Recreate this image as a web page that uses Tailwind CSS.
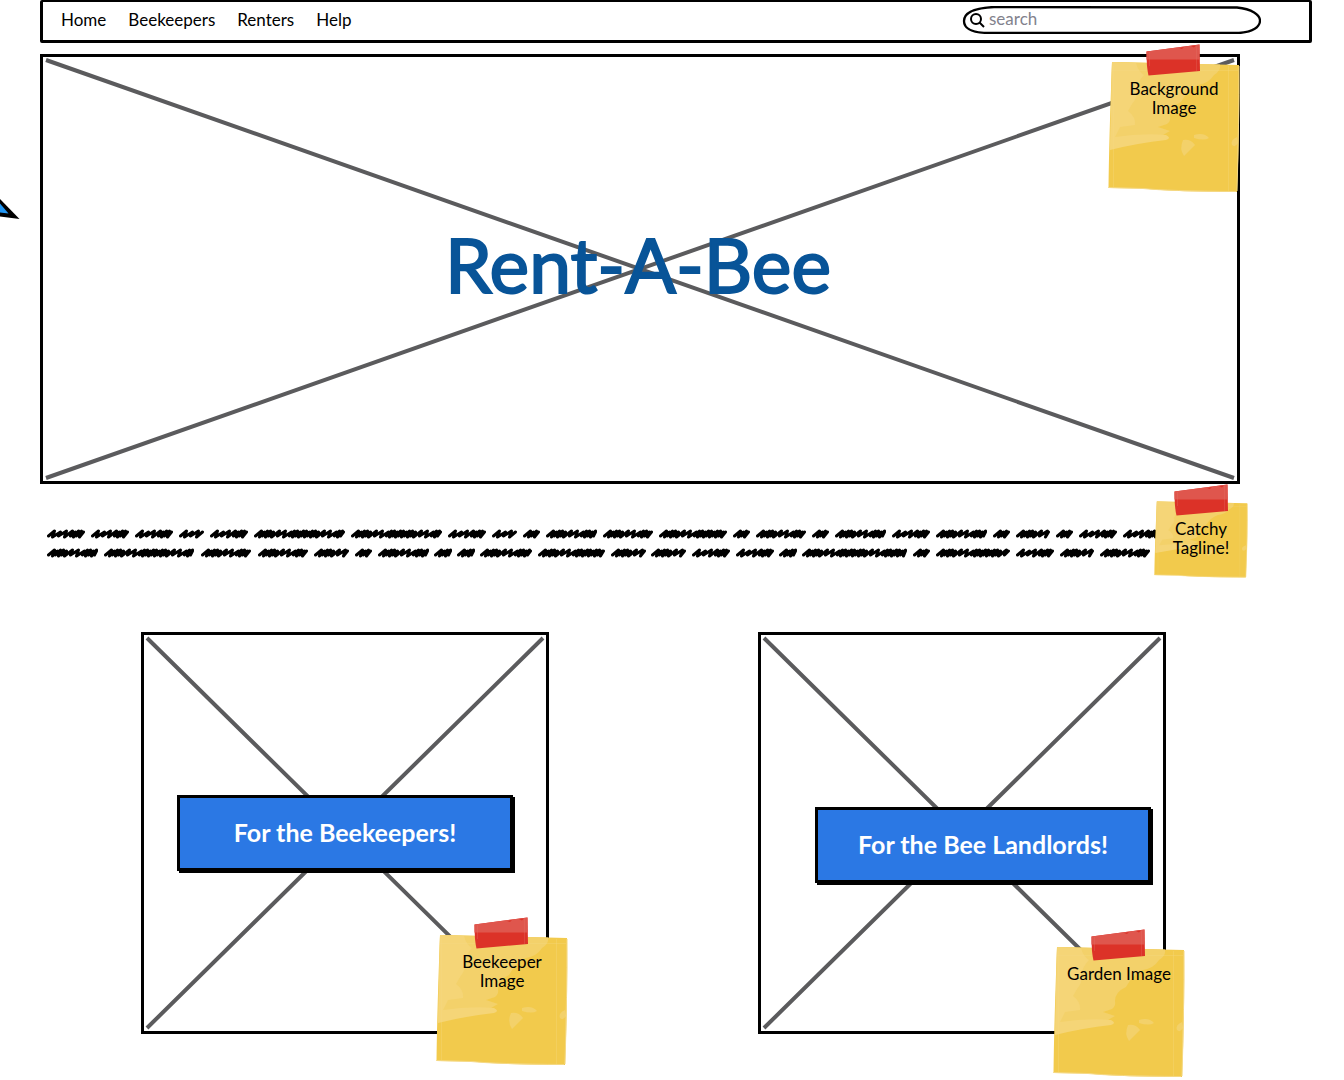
<!DOCTYPE html>
<html lang="en">
<head>
<meta charset="utf-8">
<meta name="viewport" content="width=device-width, initial-scale=1">
<title>Rent-A-Bee</title>
<script src="https://cdn.jsdelivr.net/npm/@tailwindcss/browser@4"></script>
</head>
<body class="relative min-h-screen overflow-x-hidden bg-white font-['Lato',sans-serif] text-[17px] text-black">

<svg class="absolute" width="0" height="0" aria-hidden="true">
  <symbol id="note" viewBox="0 0 132 132" preserveAspectRatio="none">
    <path fill="#f2ca4c" d="M4 1 L131 4 Q132 60 129 131 L92 130.500 Q60 130 35 127.500 L0.500 127 Q1 80 4 1Z"/>
    <path fill="#f3d16a" d="M4 1 L112 3.500 Q113 10 106 14 Q101 22 90 24 Q80 28 73 41 Q62 46 62 55 Q63 60 59 63 L50 66 Q56 68 62 70 L55 74 Q40 80 2 88Z"/>
    <path fill="#f5d577" d="M4 1 L28 2 Q30 10 36 14 Q30 20 28 29 Q30 36 24 43 L20 50 Q28 56 27 64 L12 66 L7 76 Q34 72 58 74 Q64 77 58 79 Q30 82 2 89Z"/>
    <path fill="#f3d16a" d="M86 74 Q96 71 101 77 Q96 80 86 77Z M75 79 Q83 78 87 84 L76 95 Q71 88 75 79Z M129 76 Q122 79 124 84 Q127 87 130 82Z"/>
    <path fill="none" stroke="#f5d985" stroke-opacity=".3" d="M4 9.500H130 M5.500 5V126 M120.500 5V130"/>
    <path fill="none" stroke="#f5d985" d="M0.500 126.500 L35 127.500 Q60 130 128 130.500 M131 5 Q131 60 129 130"/>
  </symbol>
  <symbol id="tape" viewBox="0 0 54 32">
    <path fill="#dc3228" d="M0.500 7.500 L53.500 0.500 L54 27 L2.500 31.500 Q0.500 24 0.500 7.500Z"/>
    <path fill="#df564d" d="M0.500 7.500 L53.500 0.500 V15.500 H0.500Z"/>
    <path fill="#dc3228" d="M33 4 L38 3 L36 5Z M45 2 L50 1.500 L48 3.500Z"/>
    <path fill="none" stroke="#e5736a" stroke-opacity=".3" d="M50.500 2V27 M3.500 8V22"/>
  </symbol>
</svg>

<svg class="absolute left-0 top-[196px]" width="20" height="24" aria-hidden="true">
  <path d="M0 3 L19.500 23 L0 20.500Z"/><path fill="#2196f3" d="M0 7.500 L8.500 17.500 L0 16.500Z"/>
</svg>

<header class="ml-10 mr-8 flex h-[43px] items-center justify-between rounded-xs border-[3px] border-t-2 border-black pb-0.5 pl-[18px] pr-12">
  <nav aria-label="Main" class="flex gap-[22px] leading-5">
    <a href="#">Home</a><a href="#">Beekeepers</a><a href="#">Renters</a><a href="#">Help</a>
  </nav>
  <div role="search" class="relative flex h-7 w-[299px] items-center gap-1 pl-2">
    <svg class="absolute inset-0 h-full w-full" viewBox="0 0 299 28" fill="none" stroke="#000" stroke-width="2.300" aria-hidden="true">
      <path d="M32 1 Q150 1 275 1.500 C290 3 298 9 298 14.500 C298 21 291 26 277 27 H28 C10 27 2 23 2 15 C2 7 10 2 32 1Z"/>
    </svg>
    <svg class="relative shrink-0" width="15" height="15" viewBox="0 0 15 15" fill="none" stroke="#000" stroke-width="2" aria-hidden="true">
      <circle cx="6" cy="6" r="5"/><path d="M9.500 9.500 L14 14"/>
    </svg>
    <input type="search" aria-label="Search" placeholder="search" class="relative -mt-0.5 min-w-0 flex-1 bg-transparent leading-5 outline-none placeholder:text-[#82828c]">
  </div>
</header>

<main class="ml-10 mr-[104px] pt-[11px]">
  <section class="relative flex h-[430px] items-center justify-center border-[3px] border-black pb-2.5">
    <svg class="absolute inset-0 h-full w-full" viewBox="0 0 1194 424" preserveAspectRatio="none" stroke="#5b5b5d" stroke-width="4" aria-hidden="true">
      <path d="M3 3 L1191 421 M3 421 L1191 3"/>
    </svg>
    <h1 class="relative pr-1 text-[75px] leading-20 text-[#085498] [-webkit-text-stroke:2px_#085498]">Rent-A-Bee</h1>
    <aside class="absolute -right-[3px] top-1 h-[132px] w-[132px] px-2 pt-[18px] text-center leading-[19px]">
      <svg class="absolute inset-0 h-full w-full"><use href="#note"/></svg>
      <svg class="absolute -top-[17px] left-[38px] h-8 w-[54px]"><use href="#tape"/></svg>
      <p class="relative">Background<br>Image</p>
    </aside>
  </section>

  <section class="relative h-[148px]">
    <svg id="tagline" class="absolute left-0 top-[39px] h-10 w-full" fill="none" stroke="#000" stroke-width="3" stroke-linecap="round" stroke-linejoin="round" role="img" aria-label="Tagline placeholder"></svg>
    <aside class="absolute -right-2 top-[17px] h-[77px] w-[94px] pt-[18px] text-center leading-[19px]">
      <svg class="absolute inset-0 h-full w-full"><use href="#note"/></svg>
      <svg class="absolute -top-[17px] left-5 h-8 w-[54px]"><use href="#tape"/></svg>
      <p class="relative">Catchy<br>Tagline!</p>
    </aside>
  </section>

  <div class="flex justify-between pb-[46px] pl-[101px] pr-[74px]">
    <section class="relative flex h-[402px] w-[408px] justify-center border-[3px] border-black pt-40">
      <svg class="absolute inset-0 h-full w-full" viewBox="0 0 402 396" preserveAspectRatio="none" stroke="#5b5b5d" stroke-width="4" aria-hidden="true">
        <path d="M3 3 L399 393 M3 393 L399 3"/>
      </svg>
      <button class="relative h-[76px] w-[336px] border-[3px] border-black bg-[#2b78e4] text-[25px] font-bold text-white shadow-[2px_2px_0_#000]">For the Beekeepers!</button>
      <aside class="absolute -bottom-[35px] -right-[22px] h-[132px] w-[132px] px-2 pt-[18px] text-center leading-[19px]">
        <svg class="absolute inset-0 h-full w-full"><use href="#note"/></svg>
        <svg class="absolute -top-[17px] left-[38px] h-8 w-[54px]"><use href="#tape"/></svg>
        <p class="relative">Beekeeper<br>Image</p>
      </aside>
    </section>
    <section class="relative flex h-[402px] w-[408px] justify-end border-[3px] border-black pr-3 pt-[172px]">
      <svg class="absolute inset-0 h-full w-full" viewBox="0 0 402 396" preserveAspectRatio="none" stroke="#5b5b5d" stroke-width="4" aria-hidden="true">
        <path d="M3 3 L399 393 M3 393 L399 3"/>
      </svg>
      <button class="relative h-[76px] w-[336px] border-[3px] border-black bg-[#2b78e4] text-[25px] font-bold text-white shadow-[2px_2px_0_#000]">For the Bee Landlords!</button>
      <aside class="absolute -bottom-[47px] -right-[22px] h-[132px] w-[132px] px-2 pt-[18px] text-center leading-[19px]">
        <svg class="absolute inset-0 h-full w-full"><use href="#note"/></svg>
        <svg class="absolute -top-[17px] left-[38px] h-8 w-[54px]"><use href="#tape"/></svg>
        <p class="relative">Garden Image</p>
      </aside>
    </section>
  </div>
</main>

<script>
  // Scribbled words of the tagline: [start, end] per word, one list per line.
  const lines = [
    [[7,45],[51,89],[95,133],[139,164],[170,208],[214,305],[311,402],[408,446],[452,477],[483,500],[506,557],[563,613],[619,687],[693,710],[716,766],[772,789],[795,846],[852,890],[896,947],[953,970],[976,1010],[1016,1033],[1039,1077],[1083,1120]],
    [[7,58],[64,154],[161,211],[218,268],[274,309],[315,332],[338,389],[394,412],[417,435],[440,492],[498,565],[571,606],[611,646],[652,690],[696,734],[739,757],[762,867],[873,890],[896,970],[976,1014],[1020,1054],[1060,1110]]
  ];
  // Gaps between strokes: loose loops at both ends of the cycle, packed ones in the middle.
  const loose = [6, 6, 6, 3, 3, 3, 3, 3];
  const packed = [3, 3, 3, 3, 6, 6, 6, 3, 3, 3, 3, 3];
  let d = '';
  lines.forEach((words, row) => words.forEach(([a, b]) => {
    const y = 11 + row * 19;
    const width = b - a;
    const steps = width < 45 && width > 36 || width === 25 ? loose : packed;
    let x = a + 1.5, i = 0;
    d += `M${x} ${y + 2}`;
    while (x + 6 <= b - 1) {
      d += `L${x + 6} ${y - 3 + (i % 3 === 1 ? 1 : 0)}L${x + 4} ${y + 3 - (i % 2)}`;
      x += steps[i % steps.length];
      i++;
    }
    d += `L${b - 1.5} ${y - 2}`;
  }));
  document.getElementById('tagline').innerHTML = `<path d="${d}"/>`;
</script>
</body>
</html>
